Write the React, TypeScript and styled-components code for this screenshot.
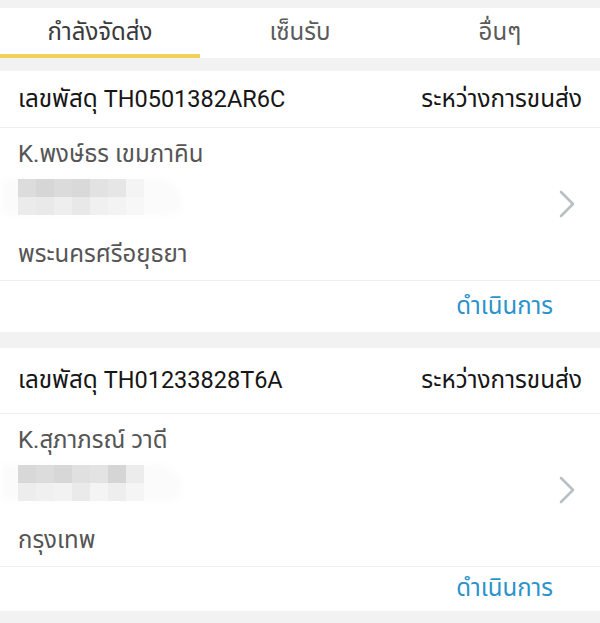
import React from "react";
import styled, { createGlobalStyle } from "styled-components";

const GlobalStyle = createGlobalStyle`
  html, body {
    margin: 0;
    padding: 0;
    background: #f2f2f2;
  }
  body {
    font-family: Roboto, "Noto Sans", "Noto Sans Thai", "DejaVu Sans", sans-serif;
  }
`;

const Page = styled.div`
  width: 600px;
  height: 623px;
  overflow: hidden;
  background: #f2f2f2;
  padding-top: 8px;
  box-sizing: border-box;
`;

const TabBar = styled.div`
  display: grid;
  grid-template-columns: repeat(3, 1fr);
  height: 50px;
  background: #fff;
`;

const Tab = styled.div<{ $active?: boolean }>`
  display: flex;
  align-items: center;
  justify-content: center;
  font-size: 24px;
  color: ${(p) => (p.$active ? "#3a3a3a" : "#5a5a5a")};
  border-bottom: 4px solid ${(p) => (p.$active ? "#f3cf5a" : "transparent")};
  padding-top: 4px;
`;

const List = styled.div`
  display: flex;
  flex-direction: column;
  gap: 16px;
  padding-top: 13px;
`;

const Card = styled.section`
  background: #fff;
`;

const CardHeader = styled.div<{ $height: number }>`
  height: ${(p) => p.$height}px;
  display: flex;
  align-items: center;
  justify-content: space-between;
  padding: 0 18px;
  font-size: 23.5px;
  color: #161616;
  border-bottom: 1px solid #efefef;
`;

// the Thai face is narrower than the phone's, so Thai runs get their own size
const Thai = styled.span`
  font-size: 24.3px;
`;

const CardBody = styled.div`
  height: 152px;
  display: flex;
  align-items: center;
  padding: 0 24px 0 18px;
  border-bottom: 1px solid #efefef;
`;

const Address = styled.div`
  flex: 1;
  display: flex;
  flex-direction: column;
  color: #555;
  font-size: 24px;
`;

const Line = styled.div`
  height: 30px;
  line-height: 30px;
`;

const Blurred = styled.div`
  position: relative;
  height: 36px;
  margin: 10px 0 24px;
`;

const Halo = styled.div`
  position: absolute;
  left: -16px;
  top: 0;
  width: 180px;
  height: 36px;
  border-radius: 0 60px 30px 18px;
  background: #fbfbfb;
  filter: blur(3px);
`;

const Pixels = styled.div`
  position: relative;
  display: grid;
  grid-template-columns: repeat(7, 18px);
  grid-auto-rows: 18px;
  filter: blur(0.5px);
`;

const Pixel = styled.div<{ $c: string }>`
  background: ${(p) => p.$c};
`;

const Action = styled.div<{ $height: number }>`
  height: ${(p) => p.$height}px;
  display: flex;
  align-items: center;
  justify-content: flex-end;
  padding: 0 47px 0 18px;
  color: #2b93cc;
  font-size: 24px;
`;

const Chevron = () => (
  <svg width="18" height="28" viewBox="0 0 18 28" fill="none">
    <path
      d="M3 2 L15 14 L3 26"
      stroke="#b9c0c5"
      strokeWidth="2.6"
      strokeLinecap="round"
      strokeLinejoin="round"
    />
  </svg>
);

interface Parcel {
  id: string;
  status: string;
  name: string;
  city: string;
  pixels: string[];
  headerHeight: number;
  actionHeight: number;
}

const parcels: Parcel[] = [
  {
    id: "TH0501382AR6C",
    status: "ระหว่างการขนส่ง",
    name: "K.พงษ์ธร เขมภาคิน",
    city: "พระนครศรีอยุธยา",
    pixels: [
      "#dcdcdc", "#d6d6d6", "#dbdbdb", "#d9d9d9", "#e2e2e2", "#e6e6e6", "#f4f4f4",
      "#ebebeb", "#e9e9e9", "#eeeeee", "#e8e8e8", "#f0f0f0", "#f3f3f3", "#f7f7f7",
    ],
    headerHeight: 56,
    actionHeight: 51,
  },
  {
    id: "TH01233828T6A",
    status: "ระหว่างการขนส่ง",
    name: "K.สุภาภรณ์ วาดี",
    city: "กรุงเทพ",
    pixels: [
      "#d8d8d8", "#dcdcdc", "#d7d7d7", "#e0e0e0", "#e3e3e3", "#d5d5d5", "#ececec",
      "#ededed", "#f0f0f0", "#f2f2f2", "#eaeaea", "#f4f4f4", "#eeeeee", "#f5f5f5",
    ],
    headerHeight: 65,
    actionHeight: 44,
  },
];

const ParcelCard: React.FC<{ parcel: Parcel }> = ({ parcel }) => (
  <Card>
    <CardHeader $height={parcel.headerHeight}>
      <span>
        <Thai>เลขพัสดุ</Thai> {parcel.id}
      </span>
      <Thai>{parcel.status}</Thai>
    </CardHeader>
    <CardBody>
      <Address>
        <Line>{parcel.name}</Line>
        <Blurred>
          <Halo />
          <Pixels>
            {parcel.pixels.map((c, i) => (
              <Pixel key={i} $c={c} />
            ))}
          </Pixels>
        </Blurred>
        <Line>{parcel.city}</Line>
      </Address>
      <Chevron />
    </CardBody>
    <Action $height={parcel.actionHeight}>ดำเนินการ</Action>
  </Card>
);

export default function App() {
  return (
    <Page>
      <GlobalStyle />
      <TabBar>
        <Tab $active>กำลังจัดส่ง</Tab>
        <Tab>เซ็นรับ</Tab>
        <Tab>อื่นๆ</Tab>
      </TabBar>
      <List>
        {parcels.map((p) => (
          <ParcelCard key={p.id} parcel={p} />
        ))}
      </List>
    </Page>
  );
}
